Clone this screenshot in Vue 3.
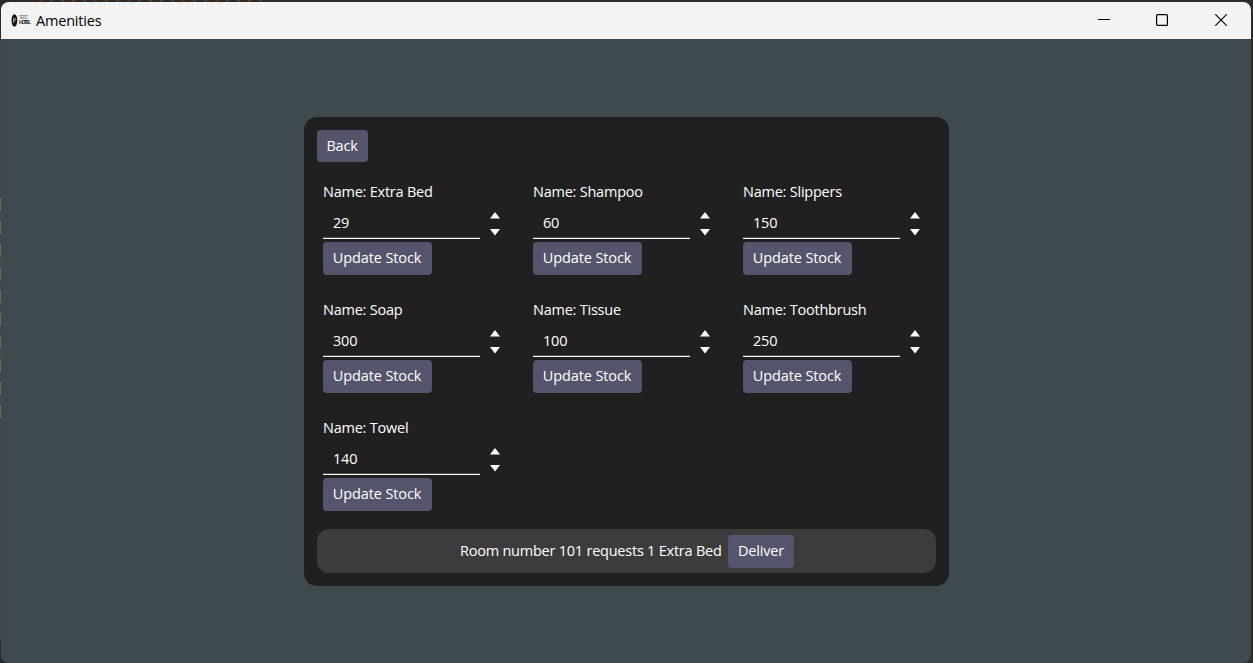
<script setup>
const amenities = [
  { name: 'Extra Bed', stock: 29 },
  { name: 'Shampoo', stock: 60 },
  { name: 'Slippers', stock: 150 },
  { name: 'Soap', stock: 300 },
  { name: 'Tissue', stock: 100 },
  { name: 'Toothbrush', stock: 250 },
  { name: 'Towel', stock: 140 },
]
</script>

<template>
  <div class="desktop">
    <div class="window">
      <header class="titlebar">
        <div class="logo">
          <svg width="7" height="13" viewBox="0 0 7 13">
            <ellipse cx="3.4" cy="6.5" rx="2.9" ry="6.2" fill="#111" />
            <path d="M2.6 8.8V4.4h1.2q.9.1.8 1.2T3.4 7" fill="none" stroke="#ddd" stroke-width=".8" />
          </svg>
          <div class="logo-text"><span class="light">TEST</span><span>HOTEL</span></div>
        </div>
        <span class="title">Amenities</span>
        <div class="controls">
          <svg width="12" height="12" viewBox="0 0 12 12"><path d="M0 5.5h12" stroke="#000" /></svg>
          <svg width="12" height="12" viewBox="0 0 12 12"><rect x=".6" y=".6" width="10.8" height="10.8" rx="1" fill="none" stroke="#000" stroke-width="1.2" /></svg>
          <svg width="12" height="12" viewBox="0 0 12 12"><path d="M.3.3l11.4 11.4M11.7.3L.3 11.7" stroke="#000" stroke-width="1.1" /></svg>
        </div>
      </header>
      <main class="content">
        <section class="panel">
          <button class="btn back">Back</button>
          <div class="grid">
            <div v-for="item in amenities" :key="item.name" class="item">
              <div class="name">Name: {{ item.name }}</div>
              <div class="spin">
                <div class="field">{{ item.stock }}</div>
                <svg width="10" height="24" viewBox="0 0 10 24">
                  <path d="M5 0l5 6.5H0z" fill="#fff" />
                  <path d="M0 17h10l-5 6.5z" fill="#fff" />
                </svg>
              </div>
              <button class="btn update">Update Stock</button>
            </div>
          </div>
          <div class="request">
            <span class="message">Room number 101 requests 1 Extra Bed</span>
            <button class="btn deliver">Deliver</button>
          </div>
        </section>
      </main>
    </div>
  </div>
</template>

<style>
body { margin: 0; background: #2b2b2b; }
</style>

<style scoped>
.desktop {
  box-sizing: border-box;
  width: 1253px;
  height: 663px;
  padding: 2px 2px 0 1px;
  background:
    repeating-linear-gradient(#6b6a55 0 13px, #444 13px 23px) 0 198px / 1px 223px no-repeat,
    repeating-linear-gradient(90deg, #2b2b2b 0 5px, #6d4c25 5px 8px, #2b2b2b 8px 11px) 34px 0 / 230px 1px no-repeat,
    linear-gradient(#444, #444) 0 40px / 1px 600px no-repeat,
    #2b2b2b;
  font-family: "Open Sans", "Noto Sans", sans-serif;
  font-size: 14.5px;
  letter-spacing: -0.2px;
  overflow: hidden;
}
.window {
  display: flex;
  flex-direction: column;
  height: 661px;
  border-radius: 8px;
  overflow: hidden;
  background: #3f4a4f;
}
.titlebar {
  display: flex;
  align-items: center;
  height: 37px;
  flex: none;
  box-sizing: border-box;
  padding: 0 24px 1px 10px;
  background: #f3f3f3;
  color: #000;
}
.logo { display: flex; align-items: center; gap: 1px; width: 25px; }
.logo-text {
  display: flex;
  flex-direction: column;
  width: 10px;
  font: bold 5px/5px "Liberation Sans", sans-serif;
  letter-spacing: -1.2px;
  color: #222;
}
.logo-text .light { font-weight: normal; color: #777; }
.title { padding-top: 2px; line-height: 20px; }
.controls { display: flex; gap: 47px; margin-left: auto; }
.controls svg { display: block; }
.controls svg:first-child { margin-right: -1px; }
.content { display: flex; flex: 1; justify-content: center; align-items: flex-start; padding-top: 78px; }
.panel {
  box-sizing: border-box;
  width: 645px;
  height: 469px;
  padding: 13px;
  border-radius: 13px;
  background: #202020;
  color: #fff;
}
.btn {
  display: block;
  box-sizing: border-box;
  height: 33px;
  padding: 0 0 2px;
  border: 0;
  border-radius: 4px;
  background: #54556c;
  color: #fff;
  font: inherit;
  letter-spacing: inherit;
  line-height: 31px;
  text-align: center;
  white-space: nowrap;
}
.back { width: 51px; height: 32px; }
.grid {
  box-sizing: border-box;
  display: grid;
  grid-template-columns: repeat(3, 210px);
  grid-auto-rows: 118px;
  padding: 19px 0 0 6px;
  height: 367px;
}
.name { height: 27px; padding-left: 0.5px; line-height: 22px; letter-spacing: -0.23px; }
.spin { display: flex; gap: 10px; height: 34px; }
.field {
  box-sizing: border-box;
  width: 157px;
  height: 31px;
  padding-left: 10.5px;
  border-bottom: 1px solid #fff;
  box-shadow: inset 0 -1px #505050;
  line-height: 30px;
}
.spin svg { display: block; margin-top: 4px; }
.update { width: 109px; letter-spacing: -0.1px; }
.request {
  box-sizing: border-box;
  display: flex;
  align-items: center;
  justify-content: center;
  gap: 7px;
  height: 44px;
  padding-left: 2px;
  border-radius: 12px;
  background: #3c3c3c;
}
.message { width: 261px; padding-bottom: 1px; letter-spacing: -0.23px; white-space: nowrap; }
.deliver { width: 66px; }
</style>
